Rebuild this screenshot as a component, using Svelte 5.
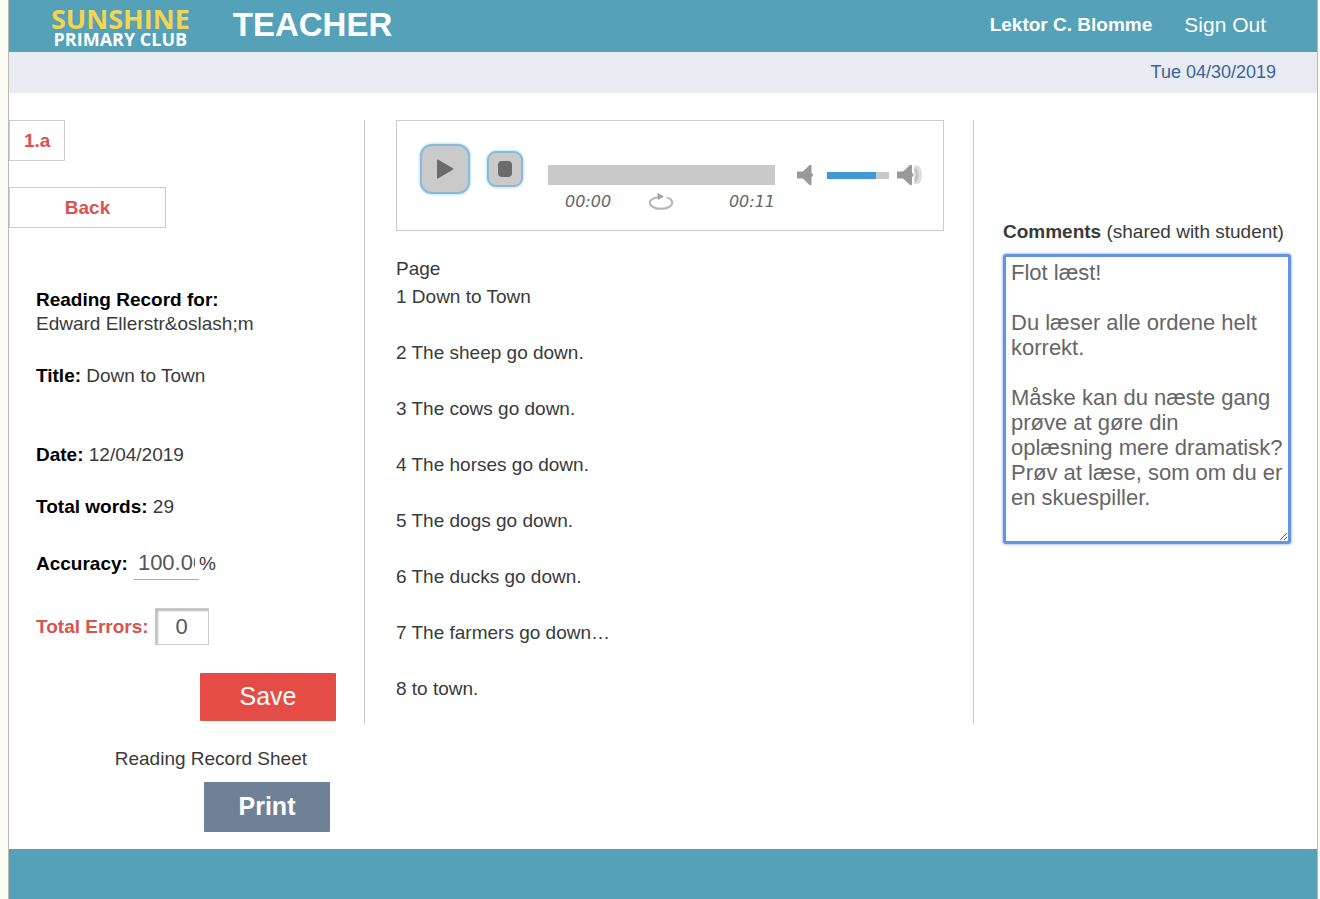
<script lang="ts">
	type Line = { page: number; text: string };

	const teacher = 'Lektor C. Blomme';
	const today = 'Tue 04/30/2019';

	const record = {
		student: 'Edward Ellerstr&oslash;m',
		title: 'Down to Town',
		date: '12/04/2019',
		words: 29
	};

	const lines: Line[] = [
		{ page: 1, text: 'Down to Town' },
		{ page: 2, text: 'The sheep go down.' },
		{ page: 3, text: 'The cows go down.' },
		{ page: 4, text: 'The horses go down.' },
		{ page: 5, text: 'The dogs go down.' },
		{ page: 6, text: 'The ducks go down.' },
		{ page: 7, text: 'The farmers go down…' },
		{ page: 8, text: 'to town.' }
	];

	const duration = 11;

	let accuracy = $state('100.00');
	let errors = $state('0');
	let position = $state(0);
	let volume = $state(79);
	let comments = $state(
		'Flot læst!\n\nDu læser alle ordene helt korrekt.\n\nMåske kan du næste gang prøve at gøre din oplæsning mere dramatisk? Prøv at læse, som om du er en skuespiller.'
	);

	let progress = $derived((position / duration) * 100);

	function clock(seconds: number): string {
		const mins = Math.floor(seconds / 60);
		const secs = Math.floor(seconds % 60);
		return `${String(mins).padStart(2, '0')}:${String(secs).padStart(2, '0')}`;
	}
</script>

<div class="page">
	<header class="topbar">
		<a class="logo" href="#home">
			<span class="logo-top">SUNSHINE</span>
			<span class="logo-bottom">PRIMARY CLUB</span>
		</a>
		<h1>TEACHER</h1>
		<span class="user">{teacher}</span>
		<a class="signout" href="#signout">Sign Out</a>
	</header>

	<div class="datebar">{today}</div>

	<main>
		<section class="details">
			<button class="tab" type="button">1.a</button>
			<button class="tab back" type="button">Back</button>

			<div class="fields">
				<p><strong>Reading Record for:</strong><br />{record.student}</p>
				<p><strong>Title:</strong> {record.title}</p>
				<p class="spaced"><strong>Date:</strong> {record.date}</p>
				<p><strong>Total words:</strong> {record.words}</p>
				<div class="field">
					<label for="accuracy">Accuracy:</label>
					<input id="accuracy" class="accuracy" type="text" bind:value={accuracy} />
					<span>%</span>
				</div>
				<div class="field">
					<label class="red" for="errors">Total Errors:</label>
					<input id="errors" class="errors" type="text" bind:value={errors} />
				</div>
				<button class="save" type="button">Save</button>
			</div>
		</section>

		<section class="reading">
			<div class="player">
				<div class="controls">
					<button class="play" type="button" aria-label="Play">
						<svg width="18" height="20" viewBox="0 0 18 20"><path d="M1 1.2Q1 0 2 .6L16.8 9.2Q18 10 16.8 10.8L2 19.4Q1 20 1 18.8Z" fill="#6b6b6b" /></svg>
					</button>
					<button class="stop" type="button" aria-label="Stop">
						<svg width="14" height="16" viewBox="0 0 14 16"><rect width="14" height="16" rx="4" fill="#6b6b6b" /></svg>
					</button>
				</div>

				<div class="progress">
					<input type="range" aria-label="Position" min="0" max={duration} bind:value={position} style:--fill="{progress}%" />
					<div class="times">
						<span>{clock(position)}</span>
						<button class="icon" type="button" aria-label="Repeat">
							<svg width="26" height="20" viewBox="0 0 26 20">
								<path d="M10 5.4C5 6 1.8 8 1.8 10.8C1.8 14 6.6 16.8 13 16.8S24.2 14 24.2 10.8C24.2 8.4 22.4 6.6 18.8 5.4" fill="none" stroke="#b4b4b4" stroke-width="2" />
								<path d="M9.400 .8L16 4.600L10 8Z" fill="#a3a3a3" />
							</svg>
						</button>
						<span class="end">{clock(duration)}</span>
					</div>
				</div>

				<div class="volume">
					<button class="icon" type="button" aria-label="Mute">
						<svg width="18" height="20" viewBox="0 0 18 20"><path d="M0 6.5H6L12.5 0H14.5V8Q16 8.5 16 10T14.5 12V20H12.5L6 13.5H0Z" fill="#999" /></svg>
					</button>
					<input type="range" aria-label="Volume" min="0" max="100" bind:value={volume} style:--fill="{volume}%" />
					<button class="icon" type="button" aria-label="Max volume">
						<svg width="26" height="20" viewBox="0 0 26 20">
							<path d="M17 .5H21Q25 3 25 10T21 19H17Z" fill="#dedede" />
							<path d="M18 3.5Q22.5 10 18 16.5" fill="none" stroke="#c4c4c4" stroke-width="3" />
							<path d="M0 6.5H6L13 0H15V8Q16.500 8.5 16.5 10T15 12V20H13L6 13.5H0Z" fill="#999" />
						</svg>
					</button>
				</div>
			</div>

			<div class="story">
				<div>Page</div>
				<ul>
					{#each lines as line}
						<li>{line.page} {line.text}</li>
					{/each}
				</ul>
			</div>
		</section>

		<section class="comments">
			<label for="comments"><strong>Comments</strong> (shared with student)</label>
			<textarea id="comments" spellcheck="false" bind:value={comments}></textarea>
		</section>

		<section class="sheet">
			<span>Reading Record Sheet</span>
			<button class="print" type="button">Print</button>
		</section>
	</main>

	<footer></footer>
</div>

<style>
	:global(body) {
		margin: 0;
		background: #fbfbf2;
	}

	.page {
		margin: 0 2px 0 8px;
		border: solid #b9bab5;
		border-width: 0 1px;
		background: #fff;
		color: #3a3a3a;
		font: 19px/24px 'Liberation Sans', Arial, sans-serif;
	}

	button,
	input,
	textarea {
		box-sizing: border-box;
		margin: 0;
		font-family: inherit;
		border-radius: 0;
	}

	button {
		cursor: pointer;
	}

	.topbar {
		display: flex;
		align-items: center;
		box-sizing: border-box;
		height: 52px;
		padding: 0 51px 2px 42px;
		background: #55a1b8;
		color: #fff;
	}

	.logo {
		display: flex;
		flex-direction: column;
		align-items: center;
		padding-top: 4px;
		font-family: 'Open Sans', sans-serif;
		font-weight: 700;
		text-decoration: none;
	}

	.logo-top {
		color: #f5d44f;
		font-size: 27px;
		line-height: 24px;
	}

	.logo-bottom {
		color: #fff;
		font-size: 18px;
		line-height: 16px;
	}

	h1 {
		margin: 0 auto 0 43px;
		font-size: 33px;
		line-height: 36px;
	}

	.user {
		font-weight: 700;
	}

	.signout {
		margin-left: 32px;
		color: #fff;
		font-size: 21px;
		text-decoration: none;
	}

	.datebar {
		padding: 8px 41px 9px;
		background: #e8ebf1;
		color: #39659c;
		font-size: 18px;
		text-align: right;
	}

	main {
		display: grid;
		grid-template-columns: minmax(0, 355fr) minmax(0, 610fr) minmax(0, 343fr);
		padding: 27px 0 17px;
	}

	.details {
		display: flex;
		flex-direction: column;
		align-items: flex-start;
		gap: 26px;
	}

	.tab {
		height: 41px;
		padding: 0 14px;
		border: 1px solid #ccc;
		background: #fff;
		color: #d9534f;
		font-size: 19px;
		font-weight: 700;
	}

	.back {
		width: 157px;
	}

	.fields {
		display: flex;
		flex-direction: column;
		align-self: stretch;
		gap: 28px;
		padding: 34px 28px 3px 27px;
	}

	p {
		margin: 0;
	}

	p strong,
	.field label {
		color: #000;
		font-weight: 700;
	}

	.spaced {
		margin-top: 27px;
	}

	.field {
		display: flex;
		align-items: center;
	}

	.field label.red {
		color: #d9534f;
	}

	.field input {
		margin-left: 6px;
		color: #555;
		font-size: 22px;
	}

	.accuracy {
		width: 65px;
		height: 33px;
		padding: 0 4px;
		border: 0;
		border-bottom: 1px solid #aaa;
		background: none;
	}

	.errors {
		width: 54px;
		height: 37px;
		padding: 0;
		border: 1px solid #ccc;
		box-shadow: inset 2px 2px 2px #bbb;
		text-align: center;
	}

	.save,
	.print {
		align-self: flex-end;
		padding: 0 0 2px;
		border: 0;
		border-radius: 1px;
		color: #fff;
		font-size: 25px;
	}

	.save {
		width: 136px;
		height: 48px;
		background: #e64c46;
	}

	.print {
		width: 126px;
		height: 50px;
		background: #6f8197;
		font-weight: 700;
	}

	.reading {
		padding: 0 29px 0 31px;
		border: solid #ccc;
		border-width: 0 1px;
	}

	.player {
		display: flex;
		align-items: flex-start;
		padding: 23px 20px 18px 23px;
		border: 1px solid #ccc;
	}

	.controls {
		display: flex;
		align-items: center;
		gap: 17px;
	}

	.play,
	.stop {
		display: grid;
		place-items: center;
		padding: 0;
		border: 2px solid #86bbdc;
		background: #cacaca;
		box-shadow: 0 0 3px #8cc3e6;
	}

	.play {
		width: 50px;
		height: 50px;
		border-radius: 12px;
	}

	.stop {
		width: 36px;
		height: 36px;
		border-radius: 9px;
	}

	.progress {
		flex: 1;
		min-width: 0;
		margin: 21px 22px 0 25px;
	}

	input[type='range'] {
		appearance: none;
		display: block;
		background: linear-gradient(#3f98d8, #3f98d8) no-repeat #c9c9c9;
		background-size: var(--fill) 100%;
	}

	input[type='range']::-webkit-slider-thumb {
		appearance: none;
		width: 1px;
		height: 1px;
	}

	.progress input {
		width: 100%;
		height: 20px;
	}

	.times {
		display: flex;
		align-items: center;
		padding: 7px 0 0 17px;
		color: #666;
		font: italic 16px/20px 'DejaVu Sans', Verdana, sans-serif;
	}

	.times .icon {
		margin-left: 37px;
	}

	.end {
		margin-left: auto;
	}

	.icon {
		padding: 0;
		border: 0;
		background: none;
	}

	.icon svg {
		display: block;
	}

	.volume {
		display: flex;
		align-items: center;
		gap: 12px;
		margin-top: 21px;
	}

	.volume input {
		width: 62px;
		height: 7px;
	}

	.volume .icon:last-child {
		margin-left: -4px;
	}

	.story {
		padding-top: 24px;
		line-height: 28px;
	}

	ul {
		display: grid;
		gap: 28px;
		margin: 0;
		padding: 0;
		list-style: none;
	}

	.comments {
		display: flex;
		flex-direction: column;
		gap: 10px;
		padding: 100px 26px 0 29px;
	}

	.comments label {
		white-space: nowrap;
	}

	textarea {
		height: 290px;
		padding: 3px 4px 3px 5px;
		border: 3px solid #6592e3;
		border-radius: 3px;
		box-shadow: 0 0 3px #6592e3;
		color: #666;
		font-size: 22px;
		line-height: 25px;
		resize: both;
	}

	.sheet {
		display: flex;
		flex-direction: column;
		gap: 11px;
		padding: 23px 34px 0 27px;
	}

	.sheet span {
		padding-right: 23px;
		text-align: right;
	}

	footer {
		height: 50px;
		background: #55a1b8;
	}
</style>
